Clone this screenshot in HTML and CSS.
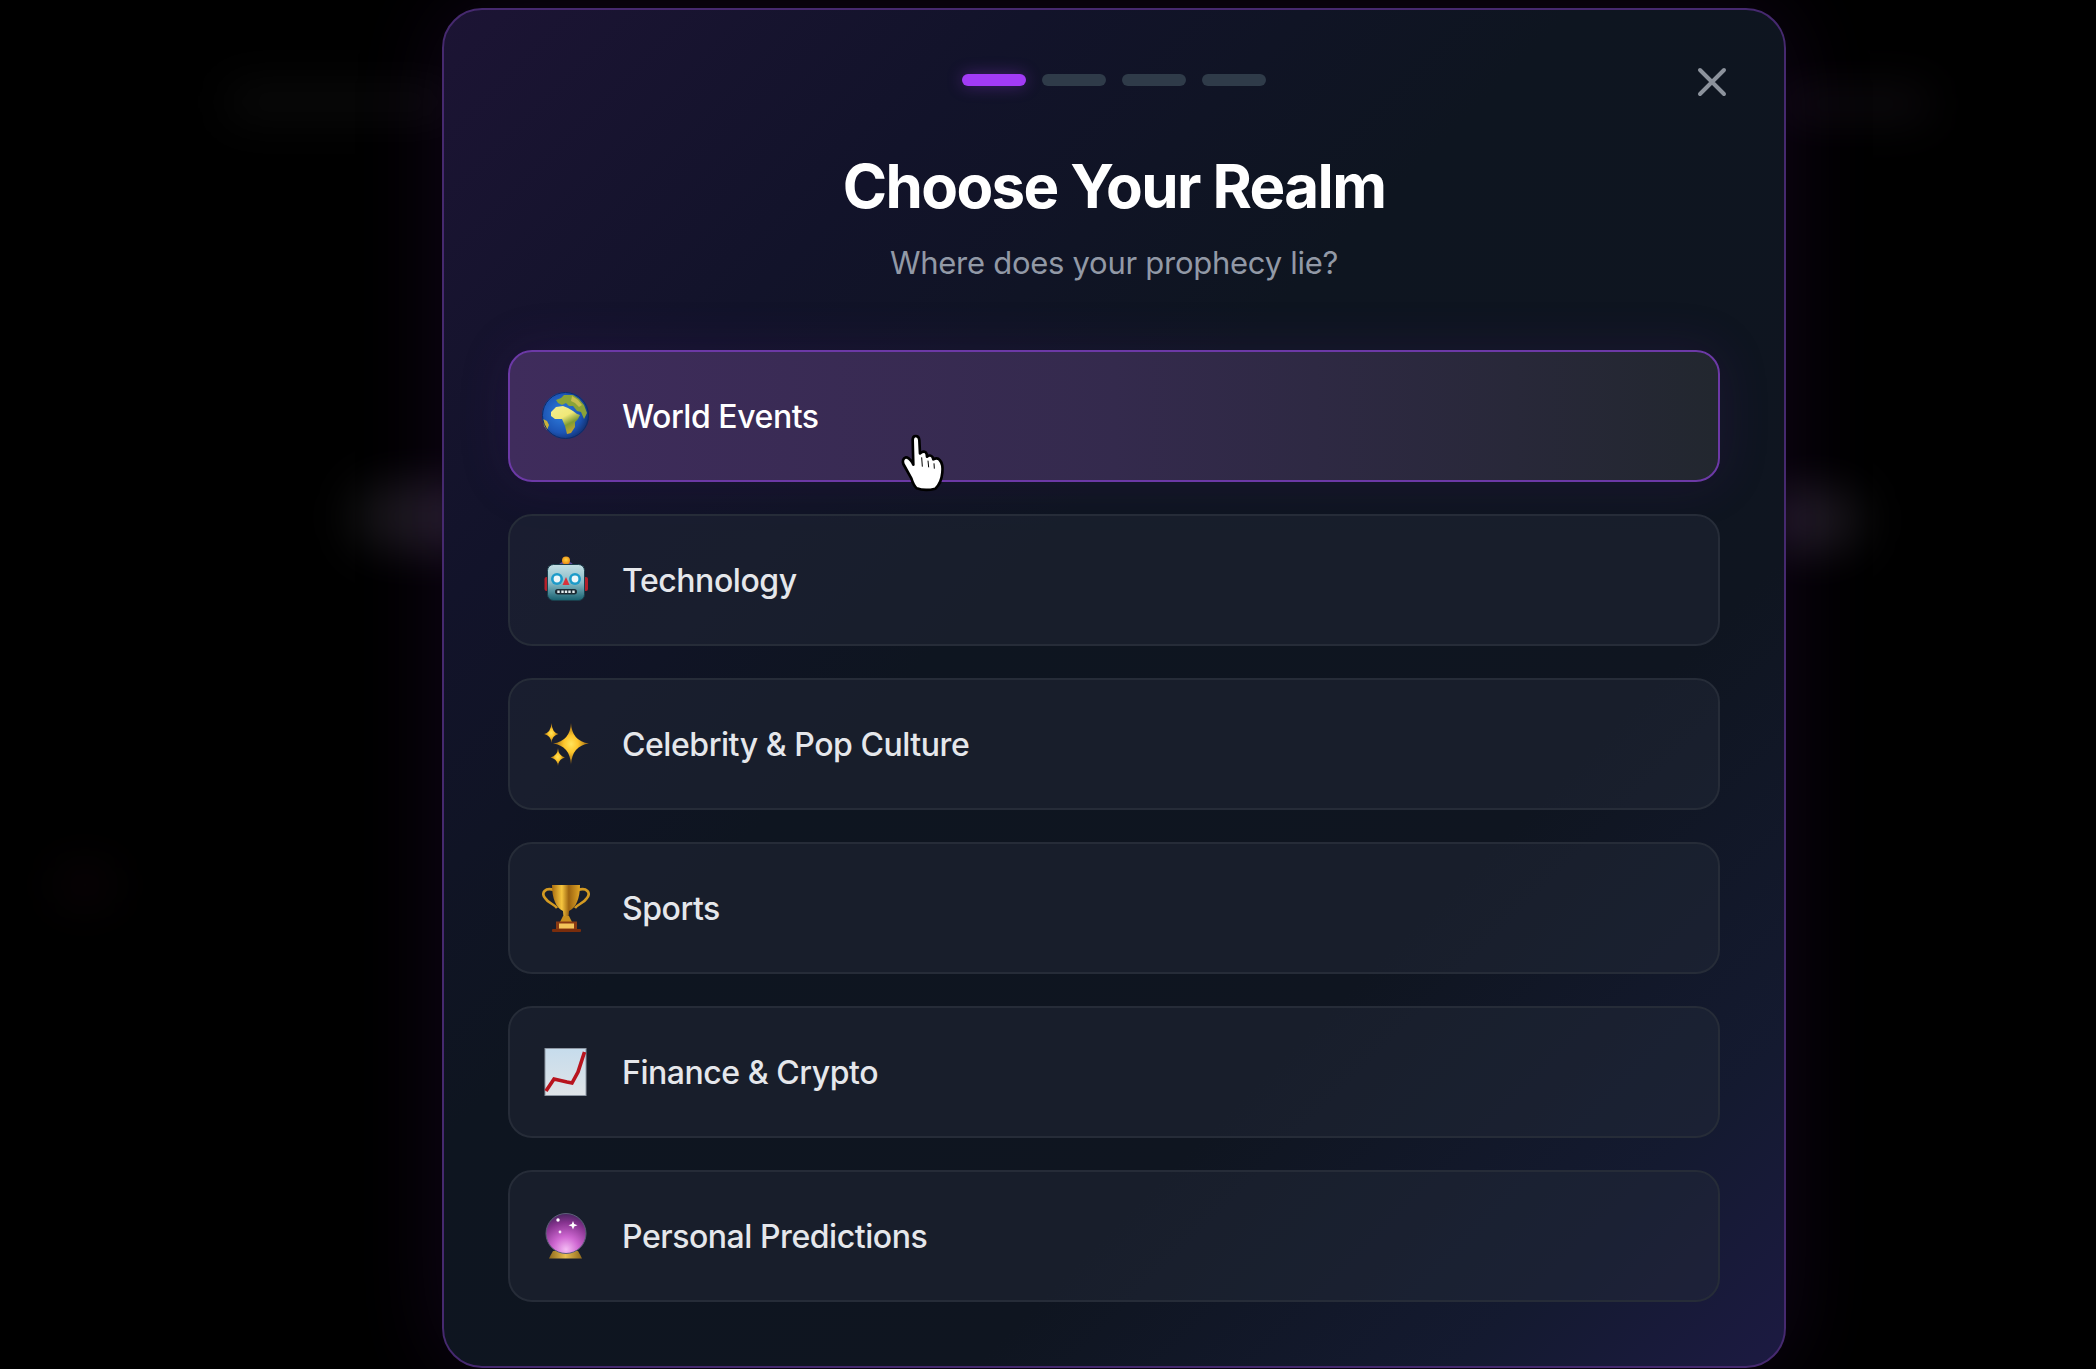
FILE: index.html
```html
<!DOCTYPE html>
<html lang="en">
    <head>
        <meta charset="UTF-8">
        <meta name="viewport" content="width=device-width, initial-scale=1.0">
        <title>Choose Your Realm</title>
        <link rel="stylesheet" href="styles.css">
    </head>
    <body>
        <!-- blurred page behind the modal -->
        <div class="ghost ghost-a"></div>
        <div class="ghost ghost-b"></div>
        <div class="ghost ghost-c"></div>
        <div class="ghost ghost-d"></div>
        <div class="ghost ghost-e"></div>

        <div class="modal">
            <button class="close" aria-label="Close">
                <svg width="32" height="32" viewBox="0 0 32 32"><path d="M4 4 L28 28 M28 4 L4 28" stroke="#8c929c" stroke-width="4" stroke-linecap="round" fill="none"/></svg>
            </button>

            <div class="steps">
                <span class="step active"></span>
                <span class="step"></span>
                <span class="step"></span>
                <span class="step"></span>
            </div>

            <h1>Choose Your Realm</h1>
            <p class="sub">Where does your prophecy lie?</p>

            <div class="realms">
                <button class="realm selected">
                    <svg class="emoji" viewBox="0 0 48 48">
                        <defs>
                            <radialGradient id="sea" cx="0.42" cy="0.45" r="0.6"><stop offset="0" stop-color="#2f7fe0"/><stop offset="0.7" stop-color="#1c54b4"/><stop offset="1" stop-color="#123070"/></radialGradient>
                            <linearGradient id="land" x1="0.2" y1="0.1" x2="0.7" y2="1"><stop offset="0" stop-color="#f2ec8a"/><stop offset="0.35" stop-color="#f0e878"/><stop offset="0.65" stop-color="#7f9c34"/><stop offset="1" stop-color="#d2a52f"/></linearGradient>
                        </defs>
                        <circle cx="23.5" cy="23.5" r="23.5" fill="url(#sea)"/>
                        <path d="M14 8 L19 6 L22 3 L31 3 L37 7 L42 13 L45 21 L42 27 L39 20 L35 19 L31 14 L27 14 L24 11 L20 13 L16 11 Z" fill="#8aa338"/>
                        <path d="M30 4 L36 8 L40 13 L37 15 L33 11 L29 9 Z" fill="#c7bd4e"/>
                        <path d="M9 20 L14 15 L21 14 L26 16 L31 19 L35 22 L38 23 L36 27 L33 30 L33 35 L29 41 L25 42 L23 34 L20 27 L13 27 L9 24 Z" fill="url(#land)"/>
                        <path d="M1 27 L5 29 L7 33 L5 38 L2 34 Z" fill="#c9b23c"/>
                        <circle cx="23.5" cy="23.5" r="23" fill="none" stroke="#0f2a66" stroke-width="1"/>
                    </svg>
                    <span>World Events</span>
                </button>
                <button class="realm">
                    <svg class="emoji" viewBox="0 0 48 48">
                        <defs>
                            <linearGradient id="head" x1="0" y1="0" x2="0" y2="1"><stop offset="0" stop-color="#c4dfe4"/><stop offset="0.5" stop-color="#88bcc8"/><stop offset="1" stop-color="#17606f"/></linearGradient>
                            <radialGradient id="bulb" cx="0.5" cy="0.4" r="0.6"><stop offset="0" stop-color="#ffd23c"/><stop offset="1" stop-color="#e88412"/></radialGradient>
                        </defs>
                        <rect x="2.500" y="21" width="5" height="14" rx="2" fill="#b3202a"/>
                        <rect x="41" y="21" width="5" height="14" rx="2" fill="#b3202a"/>
                        <ellipse cx="24" cy="9" rx="7" ry="3.5" fill="#5a4a9c"/>
                        <circle cx="24" cy="4.500" r="4" fill="url(#bulb)"/>
                        <rect x="5.500" y="8.500" width="37" height="36" rx="6" fill="url(#head)" stroke="#1b3f4c" stroke-width="1"/>
                        <circle cx="15" cy="23" r="6" fill="#1d9bc9"/>
                        <circle cx="15" cy="23" r="3.400" fill="#eef7fa"/>
                        <circle cx="33" cy="23" r="6" fill="#1d9bc9"/>
                        <circle cx="33" cy="23" r="3.400" fill="#eef7fa"/>
                        <path d="M24 21 L27.500 29 L20.500 29 Z" fill="#d8323c"/>
                        <rect x="13" y="33" width="22" height="5.500" rx="2.700" fill="#1b2a33"/>
                        <path d="M16.500 34.500 V37 M20.500 34.500 V37 M24 34.500 V37 M27.500 34.500 V37 M31.500 34.500 V37" stroke="#e6eef0" stroke-width="2.400"/>
                    </svg>
                    <span>Technology</span>
                </button>
                <button class="realm">
                    <svg class="emoji" viewBox="0 0 48 48">
                        <defs>
                            <radialGradient id="spark" cx="0.5" cy="0.5" r="0.5"><stop offset="0" stop-color="#ffe45c"/><stop offset="0.4" stop-color="#fdc52b"/><stop offset="1" stop-color="#8f5c10"/></radialGradient>
                        </defs>
                        <path d="M29 3 Q29.800 21 47 23.500 Q29.800 26 29 45 Q28.200 26 11 23.500 Q28.200 21 29 3 Z" fill="url(#spark)"/>
                        <path d="M9.500 3 Q10 12.500 16.500 14 Q10 15.500 9.500 23 Q9 15.500 2 14 Q9 12.500 9.500 3 Z" fill="url(#spark)"/>
                        <path d="M16 28 Q16.500 36 23 37.500 Q16.500 39 16 46 Q15.500 39 8.500 37.500 Q15.500 36 16 28 Z" fill="url(#spark)"/>
                    </svg>
                    <span>Celebrity &amp; Pop Culture</span>
                </button>
                <button class="realm">
                    <svg class="emoji" viewBox="0 0 48 48">
                        <defs>
                            <linearGradient id="gold" x1="0" y1="0" x2="1" y2="0"><stop offset="0" stop-color="#a86c10"/><stop offset="0.35" stop-color="#f6c63f"/><stop offset="0.6" stop-color="#9c6410"/><stop offset="1" stop-color="#e0a526"/></linearGradient>
                        </defs>
                        <path d="M12 6 C3 3 -1 9 3 14 C6 19 12 20 15 24" fill="none" stroke="#d39a22" stroke-width="2.600"/>
                        <path d="M36 6 C45 3 49 9 45 14 C42 19 36 20 33 24" fill="none" stroke="#d39a22" stroke-width="2.600"/>
                        <path d="M10 1 H38 C38 14 34 24 27 27 L26.500 33 H21.500 L21 27 C14 24 10 14 10 1 Z" fill="url(#gold)"/>
                        <path d="M18 38 L21 32 H27 L30 38 Z" fill="#c88f1e"/>
                        <rect x="14" y="37.500" width="21" height="8" fill="#8a3a12"/>
                        <rect x="17" y="39.500" width="15" height="5" fill="#f3c45a"/>
                        <rect x="10" y="45" width="29" height="3" rx="1" fill="#7a2d0c"/>
                    </svg>
                    <span>Sports</span>
                </button>
                <button class="realm">
                    <svg class="emoji" viewBox="0 0 48 48">
                        <defs>
                            <linearGradient id="paper" x1="0" y1="0" x2="0" y2="1"><stop offset="0" stop-color="#c6dcec"/><stop offset="1" stop-color="#dfe4e8"/></linearGradient>
                        </defs>
                        <rect x="3" y="0.500" width="41" height="47" fill="url(#paper)" stroke="#8e98a4" stroke-width="1"/>
                        <path d="M4 43 L12 31 L25 34 L30 35 L36 24 L42.500 4" fill="none" stroke="#b8141e" stroke-width="3.600" stroke-linejoin="miter"/>
                    </svg>
                    <span>Finance &amp; Crypto</span>
                </button>
                <button class="realm">
                    <svg class="emoji" viewBox="0 0 48 48">
                        <defs>
                            <radialGradient id="ball" cx="0.5" cy="0.9" r="0.9"><stop offset="0" stop-color="#f4bcf4"/><stop offset="0.35" stop-color="#cf68d2"/><stop offset="0.75" stop-color="#86338f"/><stop offset="1" stop-color="#4a2560"/></radialGradient>
                            <linearGradient id="stand" x1="0" y1="0" x2="1" y2="0"><stop offset="0" stop-color="#8f6a1c"/><stop offset="0.5" stop-color="#e8bd50"/><stop offset="1" stop-color="#8f6a1c"/></linearGradient>
                        </defs>
                        <path d="M11 39 L36 39 Q39 44 40 46.500 L7 46.500 Q8 44 11 39 Z" fill="url(#stand)"/>
                        <circle cx="24" cy="21.500" r="20" fill="url(#ball)" stroke="#5c5f78" stroke-width="1"/>
                        <path d="M31 9 L32.200 12 L35.500 13.200 L32.200 14.400 L31 17.500 L29.800 14.400 L26.500 13.200 L29.800 12 Z" fill="#fff"/>
                        <circle cx="16" cy="8" r="1.700" fill="#fff"/>
                        <circle cx="18" cy="20" r="1.400" fill="#f6e6f8"/>
                    </svg>
                    <span>Personal Predictions</span>
                </button>
            </div>
        </div>

        <svg class="cursor" width="80" height="80" viewBox="0 0 240 240">
            <path d="M98 60 Q98 48 107 48 Q117 48 118 60 L120 100 L124 97 Q136 91 140 102 L141 110 Q151 102 158 112 L160 118 Q172 111 179 120 Q190 132 187 158 Q184 190 166 206 Q135 214 110 205 Q100 195 94 175 L70 132 Q65 116 78 112 Q86 112 96 126 L100 134 Z" fill="#fff" stroke="#000" stroke-width="8" stroke-linejoin="round"/>
            <path d="M127 140 L125 112 M146 142 L144 122 M163 146 L162 130" stroke="#000" stroke-width="3" fill="none"/>
        </svg>
    </body>
</html>
```

FILE: styles.css
```css
* {
    box-sizing: border-box;
}

html, body {
    height: 100%;
}

body {
    margin: 0;
    background-color: #000;
    font-family: Inter, "Noto Sans", sans-serif;
    overflow: hidden;
    padding: 8px 0 0 442px;
}

.ghost {
    position: absolute;
    border-radius: 40px;
    filter: blur(22px);
}

.ghost-a {
    left: 225px;
    top: 84px;
    width: 230px;
    height: 36px;
    background-color: #0a0a0a;
}

.ghost-b {
    left: 350px;
    top: 482px;
    width: 130px;
    height: 70px;
    background: linear-gradient(90deg, #131313, #231c29);
}

.ghost-c {
    left: 1770px;
    top: 487px;
    width: 95px;
    height: 66px;
    background: linear-gradient(90deg, #231c29, #131313);
}

.ghost-d {
    left: 1780px;
    top: 87px;
    width: 150px;
    height: 34px;
    background-color: #0d0a0e;
}

.ghost-e {
    left: 55px;
    top: 865px;
    width: 60px;
    height: 40px;
    background-color: #0a0306;
}

.modal {
    position: relative;
    width: 1344px;
    height: 1360px;
    padding: 64px;
    border: 2px solid #46296f;
    border-radius: 40px;
    background: linear-gradient(135deg, #1c1434 0%, #12132a 22%, #0e1520 42%, #0f1520 70%, #141a30 88%, #1c1a42 100%);
    box-shadow: 0 0 90px rgba(88, 28, 135, 0.2);
}

.close {
    position: absolute;
    top: 56px;
    right: 56px;
    padding: 0;
    border: none;
    background: none;
    display: flex;
}

.steps {
    display: flex;
    justify-content: center;
    gap: 16px;
    margin-bottom: 64px;
}

.step {
    width: 64px;
    height: 12px;
    border-radius: 6px;
    background-color: #2f3b49;
}

.step.active {
    background-color: #a23bf6;
    box-shadow: 0 0 16px rgba(162, 59, 246, 0.35);
}

h1 {
    margin: 0 0 16px 0;
    font-size: 60px;
    line-height: 72px;
    font-weight: 700;
    letter-spacing: -1.6px;
    text-align: center;
    color: #fff;
}

.sub {
    margin: 0 0 62px 0;
    font-size: 31px;
    line-height: 50px;
    letter-spacing: -0.27px;
    text-align: center;
    color: #9299a6;
}

.realms {
    display: flex;
    flex-direction: column;
    gap: 32px;
}

.realm {
    display: flex;
    align-items: center;
    gap: 32px;
    height: 132px;
    padding: 0 32px;
    border: 2px solid #262c38;
    border-radius: 24px;
    background-color: rgba(35, 42, 56, 0.48);
    font-family: inherit;
    font-size: 32px;
    font-weight: 500;
    letter-spacing: -0.45px;
    color: #e5e7eb;
    text-align: left;
}

.realm.selected {
    border-color: #6c39a6;
    background: linear-gradient(90deg, #3f2c5c 0%, #342a4d 50%, #22272f 100%);
    box-shadow: 0 0 50px rgba(88, 28, 135, 0.18);
    color: #fff;
}

.emoji {
    width: 48px;
    height: 48px;
    flex-shrink: 0;
}

.cursor {
    position: absolute;
    left: 880px;
    top: 420px;
}
```
